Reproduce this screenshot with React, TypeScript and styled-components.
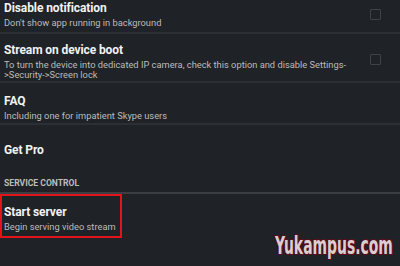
import React from "react";
import styled, { createGlobalStyle } from "styled-components";

const Global = createGlobalStyle`
  html, body { margin: 0; padding: 0; background: #1f2226; }
  body { width: 400px; height: 266px; overflow: hidden; font-family: Roboto, "Noto Sans", sans-serif; }
`;

const Screen = styled.div`
  position: relative;
  width: 400px;
  height: 266px;
  background: #1f2226;
  display: flex;
  flex-direction: column;
  overflow: hidden;
`;

const Row = styled.div<{ $h: number; $pt: number; $divider?: boolean }>`
  box-sizing: border-box;
  height: ${(p) => p.$h}px;
  padding: ${(p) => p.$pt}px 19px 0 4px;
  display: flex;
  align-items: flex-start;
  justify-content: space-between;
  border-bottom: ${(p) => (p.$divider ? "2px solid #2c3034" : "none")};
`;

const Texts = styled.div`
  display: flex;
  flex-direction: column;
`;

const Title = styled.div`
  color: #f2f2f2;
  font-size: 12px;
  line-height: 14px;
  font-weight: 700;
  letter-spacing: -0.1px;
`;

const Sub = styled.div`
  color: #bcbcbc;
  font-size: 9.3px;
  line-height: 10px;
  margin-top: 2.5px;
  font-weight: 400;
  white-space: nowrap;
`;

const CheckBox = styled.div<{ $mt: number }>`
  box-sizing: border-box;
  width: 11px;
  height: 11px;
  margin-top: ${(p) => p.$mt}px;
  border: 1.5px solid #3e4145;
  border-radius: 1px;
  flex: none;
`;

const Header = styled.div`
  box-sizing: border-box;
  height: 24px;
  padding: 8px 0 0 4px;
  color: #bdbdbd;
  font-size: 8.6px;
  line-height: 10px;
  font-weight: 700;
  border-bottom: 2px solid #3b3f44;
`;

const ServerRow = styled.div`
  height: 72px;
  display: flex;
  align-items: flex-start;
`;

const Highlight = styled.div`
  box-sizing: border-box;
  width: 122px;
  height: 44px;
  border: 2px solid #e3121b;
  padding: 9px 0 0 2px;
  display: flex;
  flex-direction: column;
`;

const Watermark = styled.div`
  position: absolute;
  left: 275px;
  top: 232px;
  font-family: "DejaVu Sans Condensed", "DejaVu Sans", sans-serif;
  font-weight: 700;
  font-size: 24px;
  line-height: 28px;
  color: #dccdd1;
  white-space: nowrap;
  transform: scaleX(0.645);
  transform-origin: left top;
  text-shadow: -1px -1px 0 #5a0e1b, 1px -1px 0 #5a0e1b, -1px 1px 0 #5a0e1b, 1px 1px 0 #5a0e1b;
`;

export default function App() {
  return (
    <Screen>
      <Global />
      <Row $h={34} $pt={1} $divider>
        <Texts>
          <Title>Disable notification</Title>
          <Sub>Don't show app running in background</Sub>
        </Texts>
        <CheckBox $mt={8} />
      </Row>
      <Row $h={49} $pt={9} $divider>
        <Texts>
          <Title>Stream on device boot</Title>
          <Sub>
            To turn the device into dedicated IP camera, check this option and disable Settings-
            <br />
            &gt;Security-&gt;Screen lock
          </Sub>
        </Texts>
        <CheckBox $mt={11} />
      </Row>
      <Row $h={42} $pt={11} $divider>
        <Texts>
          <Title>FAQ</Title>
          <Sub>Including one for impatient Skype users</Sub>
        </Texts>
      </Row>
      <Row $h={45} $pt={18}>
        <Texts>
          <Title>Get Pro</Title>
        </Texts>
      </Row>
      <Header>SERVICE CONTROL</Header>
      <ServerRow>
        <Highlight>
          <Title>Start server</Title>
          <Sub>Begin serving video stream</Sub>
        </Highlight>
      </ServerRow>
      <Watermark>Yukampus.com</Watermark>
    </Screen>
  );
}
